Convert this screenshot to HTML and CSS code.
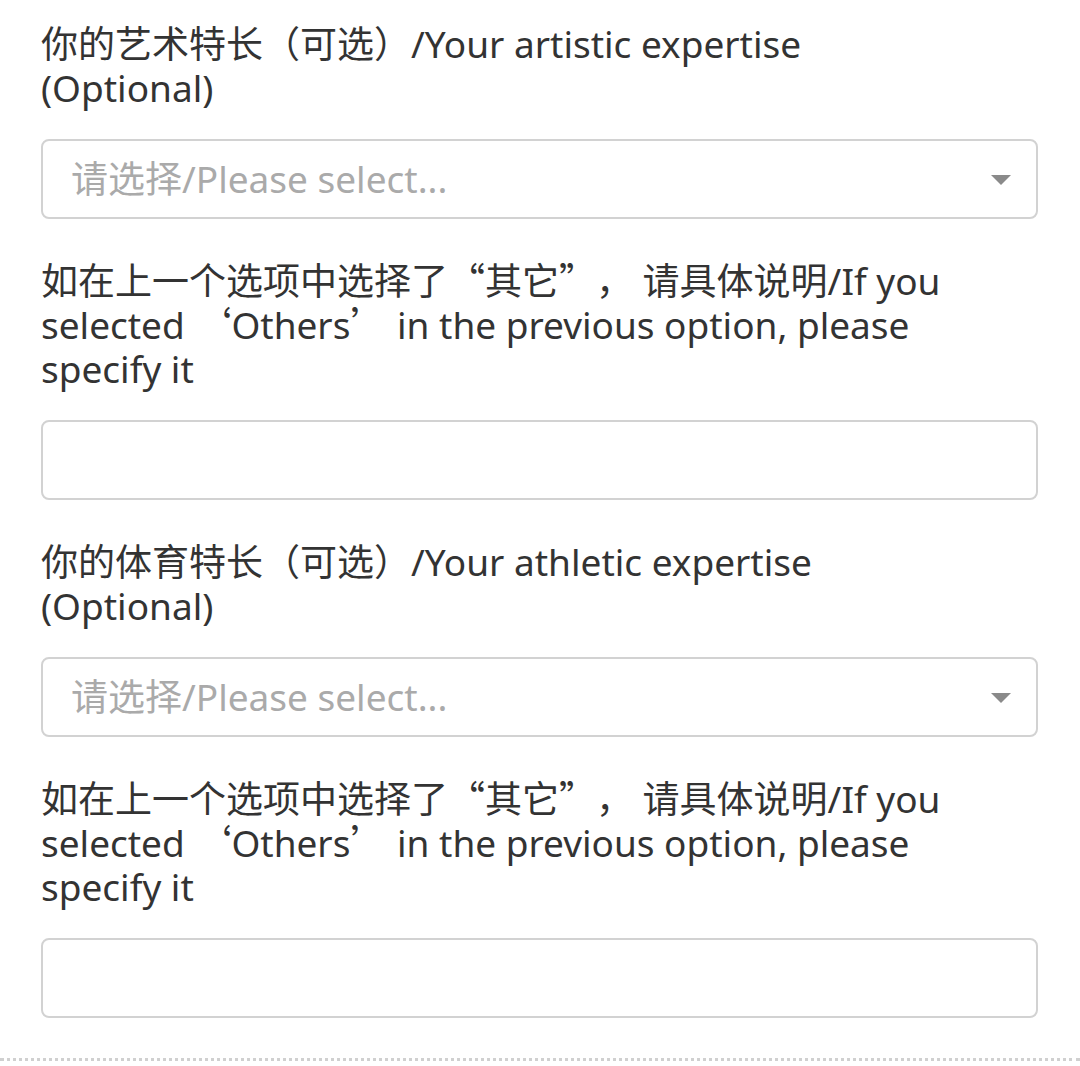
FILE: index.html
```html
<!DOCTYPE html>
<html lang="zh-CN">
<head>
  <meta charset="utf-8">
  <title>特长</title>
  <link rel="stylesheet" href="styles.css">
</head>
<body>
  <div class="form">
    <div class="field">
      <div class="label">你的艺术特长（可选）/Your artistic expertise (Optional)</div>
      <div class="select">
        <span class="placeholder">请选择/Please select...</span>
        <span class="arrow"></span>
      </div>
    </div>

    <div class="field">
      <div class="label">如在上一个选项中选择了<span class="q">“</span>其它<span class="q">”，</span> 请具体说明/If you selected <span class="q">‘</span>Others<span class="q">’</span> in the previous option, please specify it</div>
      <div class="input"></div>
    </div>

    <div class="field">
      <div class="label">你的体育特长（可选）/Your athletic expertise (Optional)</div>
      <div class="select">
        <span class="placeholder">请选择/Please select...</span>
        <span class="arrow"></span>
      </div>
    </div>

    <div class="field">
      <div class="label">如在上一个选项中选择了<span class="q">“</span>其它<span class="q">”，</span> 请具体说明/If you selected <span class="q">‘</span>Others<span class="q">’</span> in the previous option, please specify it</div>
      <div class="input"></div>
    </div>
  </div>
  <div class="divider"></div>
</body>
</html>
```

FILE: styles.css
```css
body {
  margin: 0;
  background: #ffffff;
  font-family: "Noto Sans", "Noto Sans CJK SC", sans-serif;
  color: #333333;
}
.form {
  padding: 22px 42px 0 41px;
}
.field {
  margin-bottom: 40px;
}
.label {
  font-size: 37px;
  line-height: 44px;
  margin-bottom: 29px;
  max-width: 920px;
  text-spacing-trim: space-all;
}
.label .q {
  font-family: "Noto Sans CJK SC", sans-serif;
  line-height: 0;
}
.select,
.input {
  box-sizing: border-box;
  height: 80px;
  border: 2px solid #d2d2d2;
  border-radius: 8px;
  background: #fff;
}
.select {
  display: flex;
  align-items: center;
  justify-content: space-between;
  padding: 0 25px 4px 28px;
}
.placeholder {
  font-size: 37px;
  color: #aaaaaa;
}
.arrow {
  width: 0;
  height: 0;
  margin-top: 6px;
  border-left: 10px solid transparent;
  border-right: 10px solid transparent;
  border-top: 10px solid #8a8a8a;
}
.divider {
  margin-top: 2px;
  border-top: 3px dotted #d0d0d0;
}
```
